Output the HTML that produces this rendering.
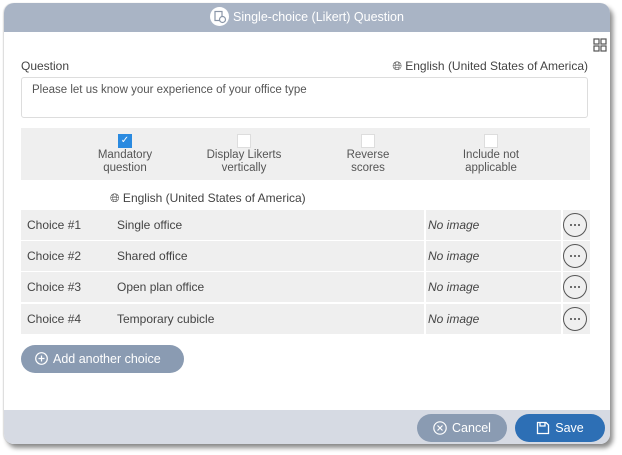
<!DOCTYPE html>
<html><head><style>
*{box-sizing:border-box;margin:0;padding:0}
body{width:622px;height:455px;background:#fff;font-family:"Liberation Sans",sans-serif;position:relative;overflow:hidden;color:#444}
.dlg{position:absolute;left:4px;top:3px;width:606px;height:441px;background:#fff;border-radius:10px;box-shadow:3px 4px 5px rgba(0,0,0,.45),-1px 0 1px rgba(0,0,0,.12);overflow:hidden}
.hdr{position:absolute;left:0;top:0;right:0;height:29px;background:#a9b4c5;color:#fff;font-size:12.5px;text-align:center;line-height:29px}
.hdr .ic{display:inline-block;width:19px;height:19px;border-radius:50%;background:#fff;vertical-align:middle;margin-right:4px;position:relative;top:-1px}
.ftr{position:absolute;left:0;bottom:0;right:0;height:34px;background:#d6dae3}
.a{position:absolute}
.t{font-size:12px;color:#444}
.panel{position:absolute;left:17px;top:125px;width:569px;height:52px;background:#efefef}
.cb{position:absolute;width:14px;height:14px;background:#fff;border:1px solid #ddd;top:6px}
.lbl{position:absolute;top:21px;font-size:11.5px;text-align:center;line-height:12.5px;color:#555;width:120px}
.row{position:absolute;left:17px;width:569px;height:30px;background:#efefef}
.row span{position:absolute;top:8px;font-size:12px;color:#444}
.row .d1{position:absolute;left:403px;top:0;width:2px;height:30px;background:#fff}
.row .d2{position:absolute;left:540px;top:0;width:2px;height:30px;background:#fff}
.dots{position:absolute;left:542px;top:3px;width:24px;height:24px;border:1px solid #555;border-radius:50%}
.btn{position:absolute;border-radius:15px;color:#fff;font-size:12.5px;line-height:28px}
.btn svg{vertical-align:middle;position:relative;top:-1px;margin-right:5px}
</style></head><body>
<div class="dlg">
 <div class="hdr"><span class="ic"><svg width="19" height="19" viewBox="0 0 19 19" fill="none" stroke="#8a96a8" stroke-width="1.2"><rect x="5" y="4.5" width="7" height="9"/><circle cx="12.5" cy="12.5" r="3" fill="#fff"/></svg></span>Single-choice (Likert) Question</div>
 <svg class="a" style="left:589px;top:35px" width="14" height="14" viewBox="0 0 14 14" fill="none" stroke="#555" stroke-width="1.2"><rect x="1" y="1" width="5" height="5"/><rect x="8" y="1" width="5" height="5"/><rect x="1" y="8" width="5" height="5"/><rect x="8" y="8" width="5" height="5"/></svg>
 <div class="a t" style="left:17px;top:56px">Question</div>
 <div class="a t" style="left:360px;top:56px;right:22px;text-align:right">&#x1F310;&#xFE0E; English (United States of America)</div>
 <div class="a" style="left:17px;top:74px;width:567px;height:41px;border:1px solid #ddd;border-radius:3px;font-size:11.5px;color:#555;padding:6px 10px">Please let us know your experience of your office type</div>
 <div class="panel">
  <div class="cb" style="left:97px;background:#2a8ae0;border-color:#2a8ae0;color:#fff;font-size:10px;line-height:12px;text-align:center">✓</div>
  <div class="lbl" style="left:44px">Mandatory<br>question</div>
  <div class="cb" style="left:216px"></div>
  <div class="lbl" style="left:163px">Display Likerts<br>vertically</div>
  <div class="cb" style="left:340px"></div>
  <div class="lbl" style="left:287px">Reverse<br>scores</div>
  <div class="cb" style="left:463px"></div>
  <div class="lbl" style="left:410px">Include not<br>applicable</div>
 </div>
 <div class="a t" style="left:106px;top:188px">&#x1F310;&#xFE0E; English (United States of America)</div>
 <div class="row" style="top:207px"><span style="left:6px">Choice #1</span><span style="left:96px">Single office</span><div class="d1"></div><span style="left:407px;font-style:italic">No image</span><div class="d2"></div><div class="dots"><svg width="22" height="22"><circle cx="7" cy="11" r="1" fill="#444"/><circle cx="11" cy="11" r="1" fill="#444"/><circle cx="15" cy="11" r="1" fill="#444"/></svg></div></div>
 <div class="row" style="top:238px"><span style="left:6px">Choice #2</span><span style="left:96px">Shared office</span><div class="d1"></div><span style="left:407px;font-style:italic">No image</span><div class="d2"></div><div class="dots"><svg width="22" height="22"><circle cx="7" cy="11" r="1" fill="#444"/><circle cx="11" cy="11" r="1" fill="#444"/><circle cx="15" cy="11" r="1" fill="#444"/></svg></div></div>
 <div class="row" style="top:269px"><span style="left:6px">Choice #3</span><span style="left:96px">Open plan office</span><div class="d1"></div><span style="left:407px;font-style:italic">No image</span><div class="d2"></div><div class="dots"><svg width="22" height="22"><circle cx="7" cy="11" r="1" fill="#444"/><circle cx="11" cy="11" r="1" fill="#444"/><circle cx="15" cy="11" r="1" fill="#444"/></svg></div></div>
 <div class="row" style="top:301px"><span style="left:6px">Choice #4</span><span style="left:96px">Temporary cubicle</span><div class="d1"></div><span style="left:407px;font-style:italic">No image</span><div class="d2"></div><div class="dots"><svg width="22" height="22"><circle cx="7" cy="11" r="1" fill="#444"/><circle cx="11" cy="11" r="1" fill="#444"/><circle cx="15" cy="11" r="1" fill="#444"/></svg></div></div>
 <div class="btn" style="left:17px;top:342px;width:163px;background:#8a9bb2;padding-left:14px"><svg width="13" height="13" viewBox="0 0 13 13" fill="none" stroke="#fff" stroke-width="1.2"><circle cx="6.5" cy="6.5" r="5.8"/><path d="M6.5 3.5v6M3.5 6.5h6"/></svg>Add another choice</div>
 <div class="ftr"></div>
 <div class="btn" style="left:413px;top:411px;width:90px;background:#8a9bb2;text-align:center"><svg width="14" height="14" viewBox="0 0 14 14" fill="none" stroke="#fff" stroke-width="1.2"><circle cx="7" cy="7" r="6.2"/><path d="M4.5 4.5l5 5M9.5 4.5l-5 5"/></svg>Cancel</div>
 <div class="btn" style="left:511px;top:411px;width:90px;background:#2d6fb5;text-align:center"><svg width="14" height="14" viewBox="0 0 14 14" fill="none" stroke="#fff" stroke-width="1.3"><path d="M1.5 1.5h8.5l2.5 2.5v8.5h-11z"/><path d="M4 1.5v3.5h5V1.5"/></svg>Save</div>
</div>
</body></html>
